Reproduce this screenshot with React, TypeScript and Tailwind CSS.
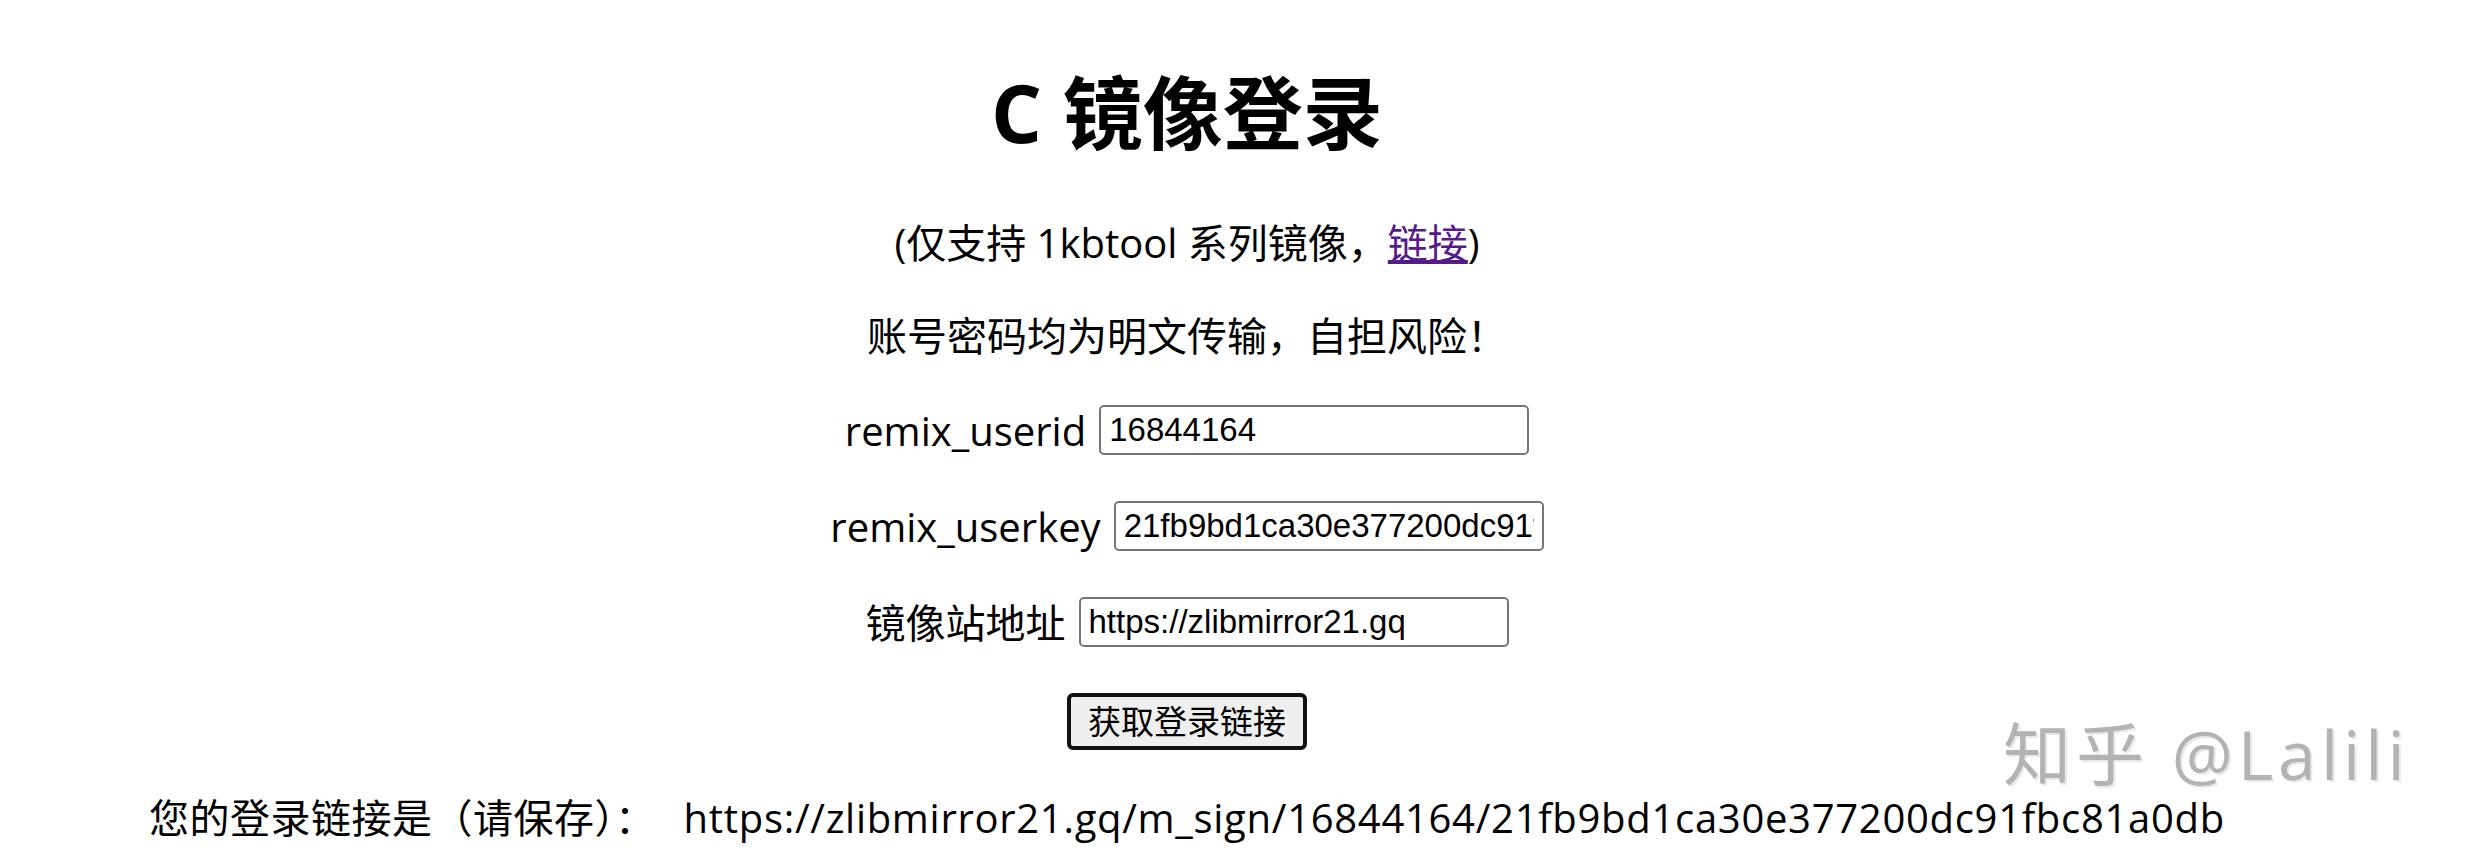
/**
 * C 镜像登录页
 * 输入 remix_userid / remix_userkey / 镜像站地址，生成登录链接
 */
type FieldProps = {
  label: string
  value: string
}

const Field = ({ label, value }: FieldProps) => (
  <div className="h-[56px] flex items-center justify-center gap-[13px]">
    <span className="text-[40px] leading-[53px]">{label}</span>
    <input
      readOnly
      value={value}
      className="w-[430px] h-[50px] border-2 border-[#767676] rounded-[5px] px-[8px] bg-white text-[33px] text-black font-['Liberation_Sans',Arial,sans-serif] outline-none"
    />
  </div>
)

export default function App() {
  const userId = '16844164'
  const userKey = '21fb9bd1ca30e377200dc91fbc81a0db'
  const mirror = 'https://zlibmirror21.gq'
  const link = `${mirror}/m_sign/${userId}/${userKey}`

  return (
    <div className="relative w-[2471px] h-[857px] overflow-hidden bg-white text-black font-['Open_Sans','Noto_Sans_CJK_SC',sans-serif]">
      <div className="w-[2374px] pt-[59px] flex flex-col items-center text-center">
        <h1 className="text-[80px] font-bold leading-[105px] mb-[52px]">C 镜像登录</h1>

        <div className="w-full flex flex-col items-center gap-[40px]">
          <p className="text-[40px] leading-[53px]">
            (仅支持 1kbtool 系列镜像，<a href="#" className="text-[#551a8b] underline">链接</a>)
          </p>
          <p className="text-[40px] leading-[53px]">账号密码均为明文传输，自担风险！</p>

          <Field label="remix_userid" value={userId} />
          <Field label="remix_userkey" value={userKey} />
          <Field label="镜像站地址" value={mirror} />

          <div className="h-[57px] mt-[3px] flex items-center">
            <button className="h-[57px] px-[17px] border-[4px] border-[#111] rounded-[6px] bg-[#efefef] text-[33px] leading-[44px] text-black">
              获取登录链接
            </button>
          </div>

          <p className="h-[56px] flex items-center gap-[28px] text-[40px] leading-[56px] whitespace-nowrap">
            <span className="tracking-[0.5px]">您的登录链接是（请保存）：</span>
            <span className="tracking-[0.7px]">{link}</span>
          </p>
        </div>
      </div>

      {/* 水印 */}
      <div className="absolute left-[2003px] top-[720px] text-[68px] leading-none tracking-[5px] text-[#b3b3b3] whitespace-nowrap [text-shadow:2px_2px_0_#e8e8e8]">
        知乎 @Lalili
      </div>
    </div>
  )
}
